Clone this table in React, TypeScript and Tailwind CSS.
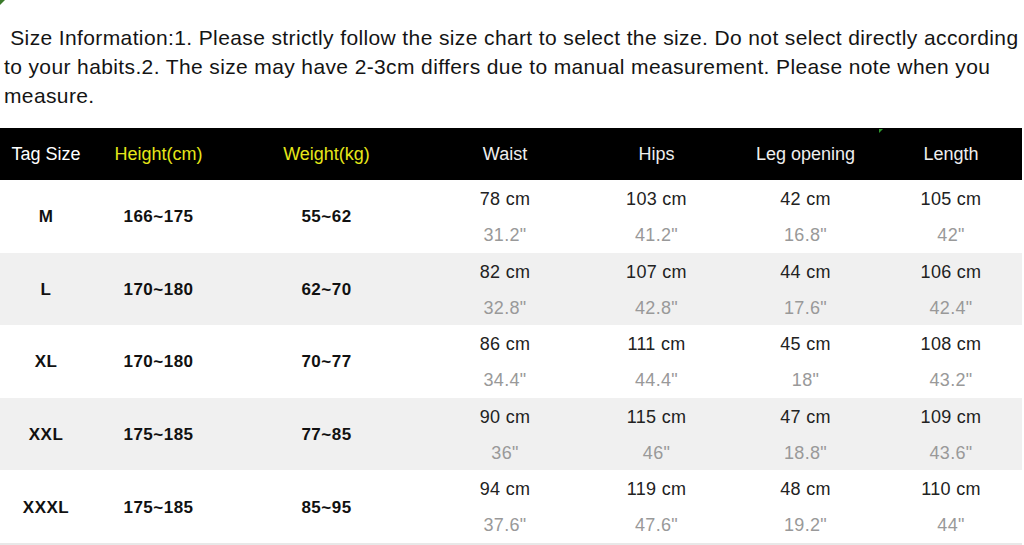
import React from 'react';

const COLS = 'grid grid-cols-[92px_133px_203px_154px_149px_149px_142px]';

const HEADERS = [
    { label: 'Tag Size', color: 'text-white' },
    { label: 'Height(cm)', color: 'text-[#e6e619]' },
    { label: 'Weight(kg)', color: 'text-[#e6e619]' },
    { label: 'Waist', color: 'text-[#eeeeee]' },
    { label: 'Hips', color: 'text-[#eeeeee]' },
    { label: 'Leg opening', color: 'text-[#eeeeee]' },
    { label: 'Length', color: 'text-[#eeeeee]' },
];

const ROWS = [
    { tag: 'M', height: '166~175', weight: '55~62', values: [['78 cm', '31.2"'], ['103 cm', '41.2"'], ['42 cm', '16.8"'], ['105 cm', '42"']] },
    { tag: 'L', height: '170~180', weight: '62~70', values: [['82 cm', '32.8"'], ['107 cm', '42.8"'], ['44 cm', '17.6"'], ['106 cm', '42.4"']] },
    { tag: 'XL', height: '170~180', weight: '70~77', values: [['86 cm', '34.4"'], ['111 cm', '44.4"'], ['45 cm', '18"'], ['108 cm', '43.2"']] },
    { tag: 'XXL', height: '175~185', weight: '77~85', values: [['90 cm', '36"'], ['115 cm', '46"'], ['47 cm', '18.8"'], ['109 cm', '43.6"']] },
    { tag: 'XXXL', height: '175~185', weight: '85~95', values: [['94 cm', '37.6"'], ['119 cm', '47.6"'], ['48 cm', '19.2"'], ['110 cm', '44"']] },
];

export default function App() {
    return (
        <div className="relative w-[1024px] h-[545px] overflow-hidden bg-white font-['Liberation_Sans',Arial,sans-serif]">
            {/* little green corner marks from the source image */}
            <div className="absolute left-0 top-0 w-0 h-0 border-t-[5px] border-r-[5px] border-t-[#3a7a2a] border-r-transparent" />

            <p className="pt-[23px] pl-[4px] text-[21px] leading-[29px] tracking-[0.38px] text-[#141414]">
                &nbsp;Size Information:1. Please strictly follow the size chart to select the size. Do not select directly according to your habits.2. The size may have 2-3cm differs due to manual measurement. Please note when you measure.
            </p>

            <div className="mt-[18px] w-[1022px]">
                {/* Header */}
                <div className={`${COLS} relative h-[52px] bg-black text-[18px]`}>
                    <div className="absolute left-[879px] top-[1px] w-0 h-0 border-t-[4px] border-r-[4px] border-t-[#2f9a2f] border-r-transparent" />
                    {HEADERS.map((h) => (
                        <div key={h.label} className={`flex items-center justify-center ${h.color}`}>
                            {h.label}
                        </div>
                    ))}
                </div>

                {/* Rows */}
                {ROWS.map((row, i) => (
                    <div
                        key={row.tag}
                        className={`${COLS} h-[72.6px] ${i % 2 === 1 ? 'bg-[#f0f0f0]' : 'bg-white'}`}
                    >
                        <div className="flex items-center justify-center text-[17px] font-bold tracking-[0.5px] text-[#111]">{row.tag}</div>
                        <div className="flex items-center justify-center text-[17px] font-bold tracking-[0.5px] text-[#111]">{row.height}</div>
                        <div className="flex items-center justify-center text-[17px] font-bold tracking-[0.5px] text-[#111]">{row.weight}</div>
                        {row.values.map(([cm, inch]) => (
                            <div key={cm} className="flex flex-col items-center pt-[1px] text-[18px] tracking-[0.3px]">
                                <span className="leading-[36px] text-[#222]">{cm}</span>
                                <span className="leading-[37px] text-[#999]">{inch}</span>
                            </div>
                        ))}
                    </div>
                ))}
                <div className="h-[2px] bg-[#e8e8e8]" />
            </div>
        </div>
    );
}
